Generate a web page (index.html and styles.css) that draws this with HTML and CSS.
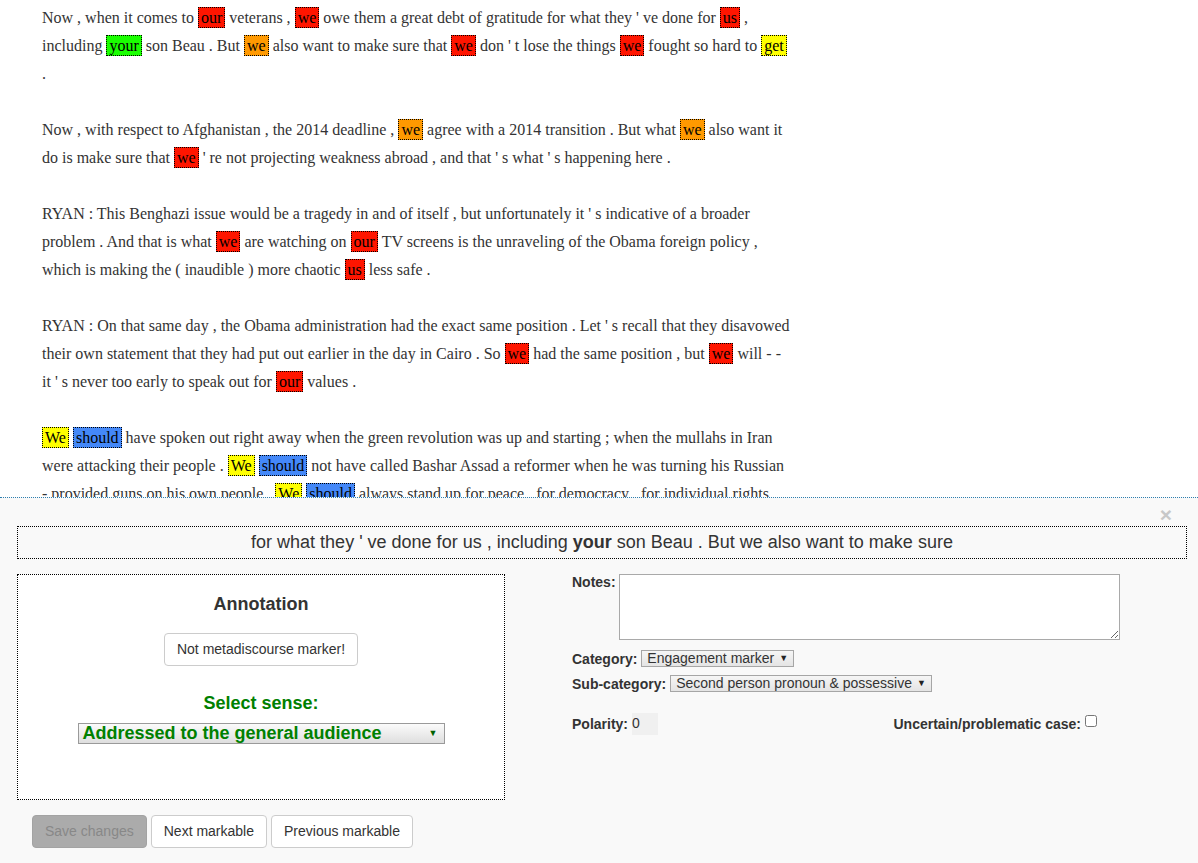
FILE: index.html
```html
<!DOCTYPE html>
<html>
<head>
<meta charset="utf-8">
<title>Annotation</title>
<link rel="stylesheet" href="styles.css">
</head>
<body>
<div class="doc">
  <p>Now , when it comes to <span class="m red">our</span> veterans , <span class="m red">we</span> owe them a great debt of gratitude for what they ' ve done for <span class="m red">us</span> , including <span class="m green">your</span> son Beau . But <span class="m orange">we</span> also want to make sure that <span class="m red">we</span> don ' t lose the things <span class="m red">we</span> fought so hard to <span class="m yellow">get</span> .</p>
  <p>Now , with respect to Afghanistan , the 2014 deadline , <span class="m orange">we</span> agree with a 2014 transition . But what <span class="m orange">we</span> also want it do is make sure that <span class="m red">we</span> ' re not projecting weakness abroad , and that ' s what ' s happening here .</p>
  <p>RYAN : This Benghazi issue would be a tragedy in and of itself , but unfortunately it ' s indicative of a broader problem . And that is what <span class="m red">we</span> are watching on <span class="m red">our</span> TV screens is the unraveling of the Obama foreign policy , which is making the ( inaudible ) more chaotic <span class="m red">us</span> less safe .</p>
  <p>RYAN : On that same day , the Obama administration had the exact same position . Let ' s recall that they disavowed their own statement that they had put out earlier in the day in Cairo . So <span class="m red">we</span> had the same position , but <span class="m red">we</span> will - - it ' s never too early to speak out for <span class="m red">our</span> values .</p>
  <p><span class="m yellow">We</span> <span class="m blue">should</span> have spoken out right away when the green revolution was up and starting ; when the mullahs in Iran were attacking their people . <span class="m yellow">We</span> <span class="m blue">should</span> not have called Bashar Assad a reformer when he was turning his Russian - provided guns on his own people . <span class="m yellow">We</span> <span class="m blue">should</span> always stand up for peace , for democracy , for individual rights .</p>
</div>

<div class="panel">
  <span class="close">×</span>
  <div class="context">for what they ' ve done for us , including <b>your</b> son Beau . But we also want to make sure</div>
  <div class="main">
    <div class="anno">
      <h3 class="anno-title">Annotation</h3>
      <button class="btn">Not metadiscourse marker!</button>
      <div class="sense-label">Select sense:</div>
      <div class="sense-select">Addressed to the general audience</div>
    </div>
    <div class="fields">
      <div class="row notes-row">
        <label class="lbl">Notes:</label>
        <textarea class="notes"></textarea>
      </div>
      <div class="row cat-row">
        <label class="lbl">Category:</label>
        <span class="sel">Engagement marker</span>
      </div>
      <div class="row sub-row">
        <label class="lbl">Sub-category:</label>
        <span class="sel">Second person pronoun &amp; possessive</span>
      </div>
      <div class="row pol-row">
        <div class="pol">
          <label class="lbl">Polarity:</label>
          <span class="pol-val">0</span>
        </div>
        <div class="unc">
          <label class="lbl">Uncertain/problematic case:</label>
          <input type="checkbox" class="chk">
        </div>
      </div>
    </div>
  </div>
  <div class="actions">
    <button class="btn disabled">Save changes</button>
    <button class="btn">Next markable</button>
    <button class="btn">Previous markable</button>
  </div>
</div>
</body>
</html>
```
FILE: styles.css
```css
html, body {
  margin: 0;
  padding: 0;
  background: #fff;
}
body {
  font-family: "Liberation Serif", "Times New Roman", serif;
  color: #333;
}
.doc {
  width: 750px;
  margin-left: 42px;
  padding-top: 4px;
  font-size: 16px;
  line-height: 28px;
}
.doc p {
  margin: 0 0 28px;
}
.m {
  border: 1px dotted #000;
  padding: 1px 2px;
  color: #000;
}
.red { background: #ff1500; }
.green { background: #1aff00; }
.orange { background: #ff9900; }
.yellow { background: #ffff00; }
.blue { background: #4488f8; }

.panel {
  position: fixed;
  left: 0;
  right: 0;
  bottom: 0;
  top: 497px;
  border-top: 1px dotted #2e7fb0;
  background: #f9f9f9;
  font-family: "Liberation Sans", Arial, sans-serif;
  font-size: 14px;
  color: #333;
  padding-top: 28px;
  box-sizing: border-box;
}
.close {
  position: absolute;
  top: 6px;
  right: 26px;
  font-size: 21px;
  font-weight: bold;
  line-height: 1;
  color: #c8c8c8;
}
.context {
  margin: 0 11px 0 17px;
  border: 1px dotted #000;
  height: 31px;
  line-height: 31px;
  text-align: center;
  font-size: 18px;
  color: #333;
}
.main {
  display: flex;
  margin-top: 15px;
}
.anno {
  width: 488px;
  height: 226px;
  margin-left: 17px;
  border: 1px dotted #000;
  background: #fff;
  text-align: center;
  padding-top: 19px;
  box-sizing: border-box;
  flex-shrink: 0;
}
.anno .anno-title {
  margin: 0;
  font-size: 18px;
  line-height: 20px;
  font-weight: bold;
  color: #333;
}
.btn {
  font-family: "Liberation Sans", Arial, sans-serif;
  font-size: 14px;
  line-height: 19px;
  padding: 6px 12px;
  border: 1px solid #ccc;
  border-radius: 4px;
  background: #fff;
  color: #333;
  margin: 0;
}
.anno .btn {
  margin-top: 19px;
}
.sense-label {
  margin-top: 27px;
  font-size: 18px;
  line-height: 20px;
  font-weight: bold;
  color: #008000;
}
.sense-select {
  position: relative;
  width: 367px;
  margin: 10px auto 0;
  border: 1px solid #9a9a9a;
  background: linear-gradient(#fbfbfb, #dedede);
  text-align: left;
  font-size: 18px;
  font-weight: bold;
  line-height: 19px;
  color: #008000;
  padding-left: 4px;
  box-sizing: border-box;
}
.sense-select::after {
  content: "▼";
  position: absolute;
  right: 6px;
  top: 0;
  font-size: 9px;
  color: #006000;
}
.fields {
  margin-left: 67px;
  display: flex;
  flex-direction: column;
}
.row {
  display: flex;
  align-items: center;
  gap: 4px;
}
.lbl {
  font-weight: bold;
  line-height: 16px;
  color: #333;
}
.notes-row {
  align-items: flex-start;
  gap: 3px;
}
.notes {
  width: 501px;
  height: 66px;
  box-sizing: border-box;
  border: 1px solid #a9a9a9;
  background: #fff;
  margin: 0;
}
.cat-row {
  margin-top: 10px;
}
.sub-row {
  margin-top: 8px;
}
.sel {
  display: inline-flex;
  align-items: center;
  gap: 5px;
  border: 1px solid #a6a6a6;
  background: linear-gradient(#f6f6f6, #e4e4e4);
  padding: 0 5px;
  line-height: 15px;
  font-size: 14px;
  color: #333;
}
.sel::after {
  content: "▼";
  font-size: 9px;
  color: #222;
}
.pol-row {
  margin-top: 21px;
  width: 525px;
  justify-content: space-between;
}
.pol {
  display: flex;
  align-items: center;
  gap: 4px;
}
.pol-val {
  display: inline-block;
  width: 26px;
  height: 22px;
  line-height: 20px;
  background: #f0f0f0;
}
.unc {
  display: flex;
  align-items: center;
}
.chk {
  width: 12px;
  height: 12px;
  margin: 0 0 6px 4px;
}
.actions {
  display: flex;
  gap: 4px;
  margin: 15px 0 0 32px;
}
.btn.disabled {
  background: #ababab;
  border-color: #a3a3a3;
  color: #888;
}
```
